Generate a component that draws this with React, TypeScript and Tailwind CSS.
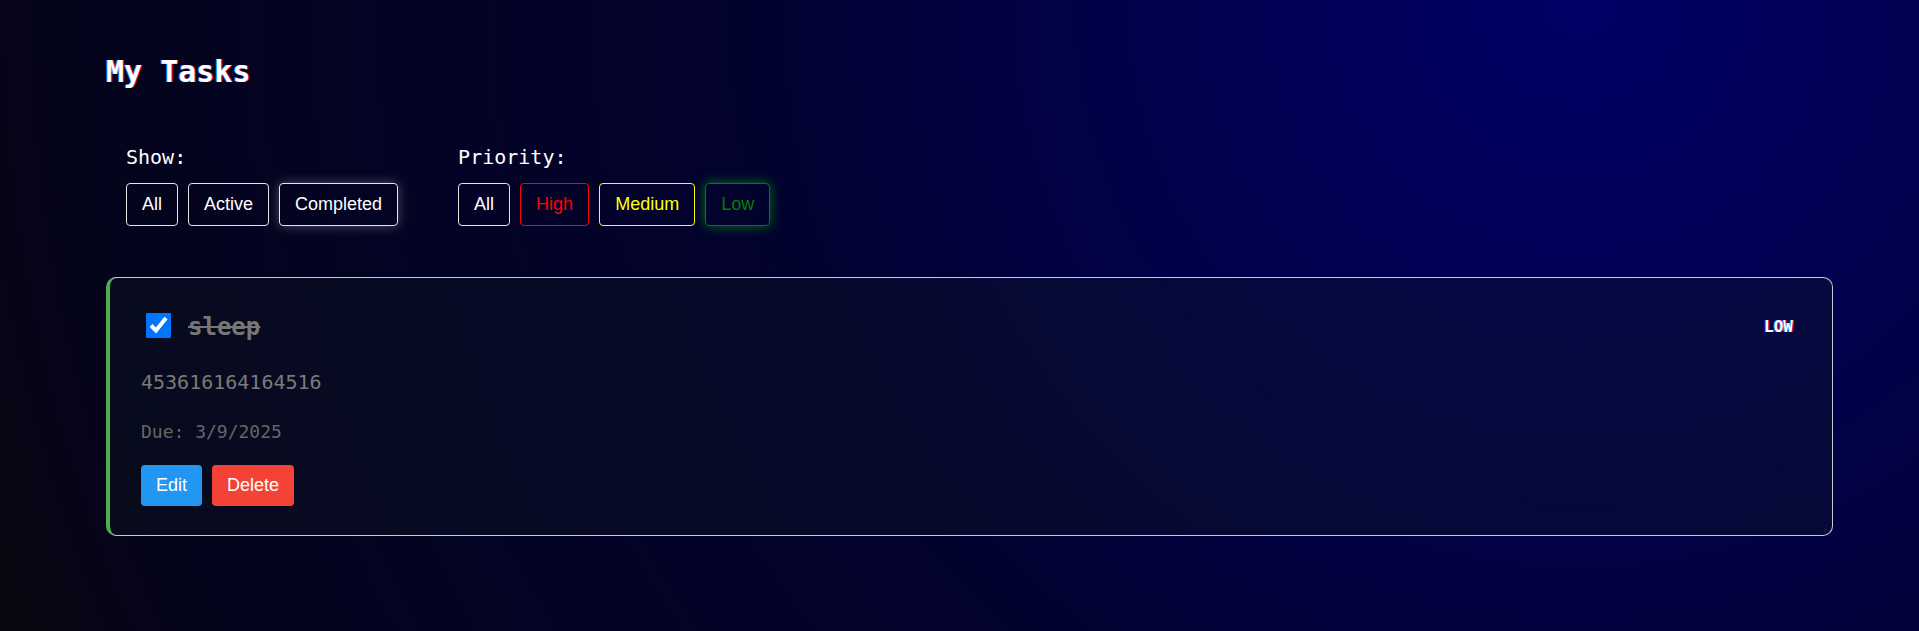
import React from "react";

const mono = "font-['DejaVu_Sans_Mono','Liberation_Mono',monospace]";
const sans = "font-['Liberation_Sans',Arial,sans-serif]";

function FilterButton({
  label,
  cls,
}: {
  label: string;
  cls: string;
}) {
  return (
    <button
      className={`${sans} text-[18px] leading-[21px] px-[15px] py-[10px] border rounded-[4px] bg-transparent ${cls}`}
    >
      {label}
    </button>
  );
}

export default function App() {
  return (
    <div className="min-h-screen w-full bg-[radial-gradient(circle_at_1580px_0px,#000066_0px,#000058_250px,#010148_500px,#02022e_850px,#05041a_1550px,#08070f_1700px)] pl-[106px] pr-[86px] pt-[54px] pb-[40px]">
      <h1
        className={`${mono} text-[30px] leading-[36px] font-bold text-white [text-shadow:-1px_0_rgba(0,140,255,0.85),1px_0_rgba(255,0,60,0.85)]`}
      >
        My Tasks
      </h1>

      <div className="flex gap-[60px] pl-[20px] mt-[55px]">
        <div className="flex flex-col">
          <div className={`${mono} text-[20px] leading-[24px] text-white`}>Show:</div>
          <div className="flex gap-[10px] mt-[14px]">
            <FilterButton label="All" cls="text-white border-[#e6e6e6]" />
            <FilterButton label="Active" cls="text-white border-[#e6e6e6]" />
            <FilterButton
              label="Completed"
              cls="text-white border-[#e6e6e6] shadow-[0_0_12px_rgba(255,255,255,0.3)]"
            />
          </div>
        </div>
        <div className="flex flex-col">
          <div className={`${mono} text-[20px] leading-[24px] text-white`}>Priority:</div>
          <div className="flex gap-[10px] mt-[14px]">
            <FilterButton label="All" cls="text-white border-[#e6e6e6]" />
            <FilterButton label="High" cls="text-[#ff0000] border-[#ff0000]" />
            <FilterButton label="Medium" cls="text-[#ffff00] border-[#ffff00]" />
            <FilterButton
              label="Low"
              cls="text-[#008000] border-[#008000] shadow-[0_0_12px_rgba(0,200,0,0.55)]"
            />
          </div>
        </div>
      </div>

      <div className="mt-[51px] rounded-[10px] border border-[#c8c8d0] border-l-[4px] border-l-[#4caf50] bg-[rgba(15,25,35,0.35)] pl-[31px] pr-[31px] pt-[35px] pb-[29px]">
        <div className="flex items-center h-[25px]">
          <input
            type="checkbox"
            checked
            readOnly
            className="ml-[5px] mr-[17px] w-[25px] h-[25px] accent-[#0075ff] shrink-0"
          />
          <span
            className={`${mono} mt-[4px] text-[24px] leading-[25px] font-bold text-[#777777] line-through decoration-[#777777]`}
          >
            sleep
          </span>
          <span
            className={`ml-auto ${mono} mt-[2px] text-[16px] leading-[20px] font-bold text-white px-[8px] [text-shadow:-1px_0_rgba(0,140,255,0.85),1px_0_rgba(255,0,60,0.85)]`}
          >
            LOW
          </span>
        </div>
        <p className={`${mono} mt-[32px] text-[20px] leading-[24px] text-[#7a7a7a]`}>
          453616164164516
        </p>
        <p className={`${mono} mt-[27px] text-[18px] leading-[22px] text-[#666666]`}>
          Due: 3/9/2025
        </p>
        <div className="flex gap-[10px] mt-[22px]">
          <button
            className={`${sans} text-[18px] leading-[21px] px-[15px] py-[10px] rounded-[4px] bg-[#2196f3] text-white`}
          >
            Edit
          </button>
          <button
            className={`${sans} text-[18px] leading-[21px] px-[15px] py-[10px] rounded-[4px] bg-[#f44336] text-white`}
          >
            Delete
          </button>
        </div>
      </div>
    </div>
  );
}
